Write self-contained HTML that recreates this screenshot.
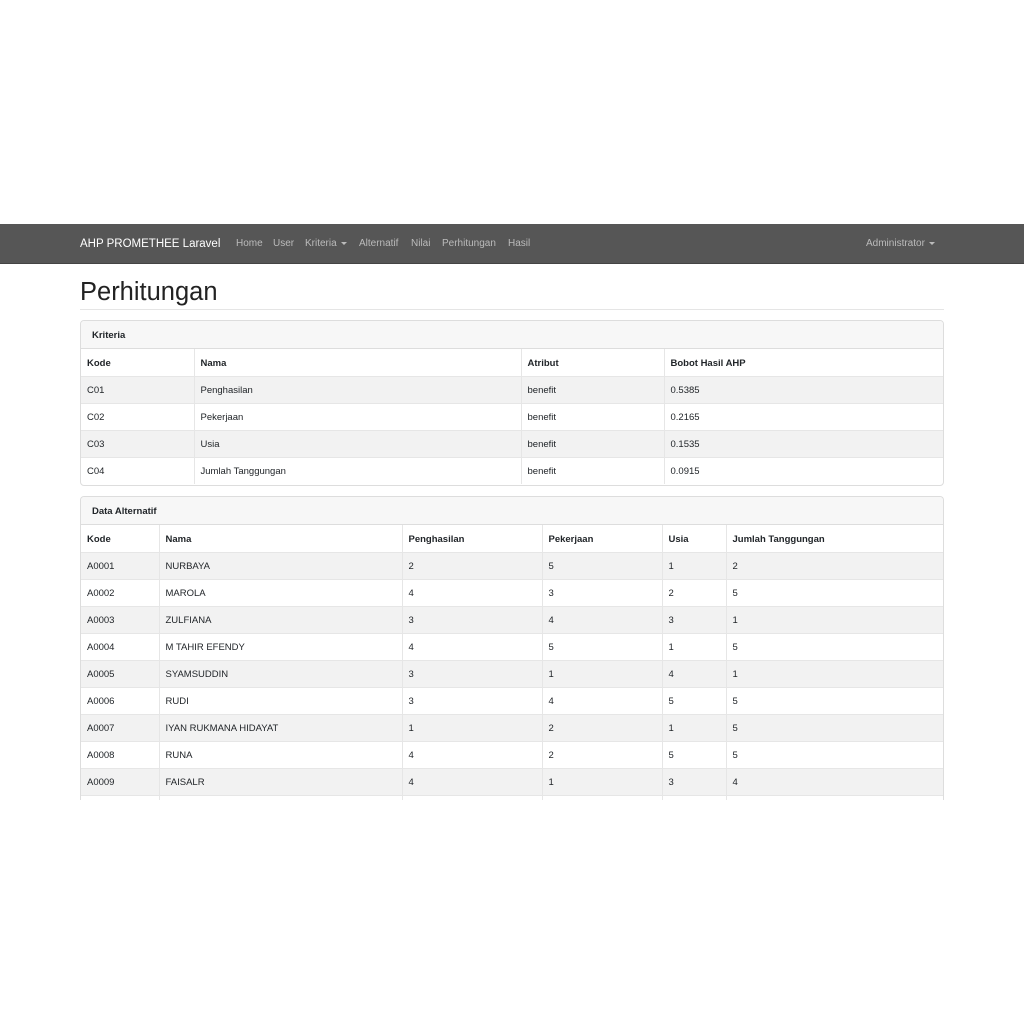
<!DOCTYPE html>
<html><head><style>
body{margin:0;width:1024px;height:1024px;background:#fff;font-family:"Liberation Sans",sans-serif;position:relative;overflow:hidden;color:#212529}
.nav{position:absolute;left:0;top:224px;width:1024px;height:39px;background:#565656;border-bottom:1px solid #444}
.nav span{position:absolute;top:1px;line-height:38px;font-size:10px;color:#bbb}
.brand{font-size:11.5px!important;color:#fff!important;left:80px}
.caret{display:inline-block;border-left:3px solid transparent;border-right:3px solid transparent;border-top:3px solid #bbb;vertical-align:middle;margin-left:4px}
h1{position:absolute;left:80px;top:275px;margin:0;font-weight:400;font-size:25.5px;line-height:34px;color:#222}
.hr{position:absolute;left:80px;top:309px;width:864px;height:1px;background:#e5e5e5}
.card{position:absolute;left:80px;width:862px;border:1px solid #ddd;border-radius:4px;overflow:hidden;background:#fff}
.ch{height:27px;line-height:29px;background:#f7f7f7;border-bottom:1px solid #ddd;font-size:9.5px;font-weight:bold;padding-left:11px}
table{border-collapse:collapse;width:100%;table-layout:fixed;font-size:9.5px}
td,th{height:27px;padding:2px 6px 0;text-align:left;border-left:1px solid #e6e6e6;border-top:1px solid #e6e6e6;box-sizing:border-box}
td:first-child,th:first-child{border-left:none}
th{border-top:none;height:27px}
tr:nth-child(even) td{background:#f2f2f2}
</style></head><body>
<div class="nav">
<span class="brand">AHP PROMETHEE Laravel</span>
<span style="left:236px">Home</span><span style="left:273px">User</span>
<span style="left:305px">Kriteria<i class="caret"></i></span>
<span style="left:359px">Alternatif</span><span style="left:411px">Nilai</span>
<span style="left:442px">Perhitungan</span><span style="left:508px">Hasil</span>
<span style="left:866px">Administrator<i class="caret"></i></span>
</div>
<h1>Perhitungan</h1><div class="hr"></div>
<div class="card" style="top:320px;height:164px">
<div class="ch">Kriteria</div>
<table><colgroup><col style="width:113px"><col style="width:327px"><col style="width:143px"><col></colgroup>
<tr><th>Kode</th><th>Nama</th><th>Atribut</th><th>Bobot Hasil AHP</th></tr>
<tr><td>C01</td><td>Penghasilan</td><td>benefit</td><td>0.5385</td></tr>
<tr><td>C02</td><td>Pekerjaan</td><td>benefit</td><td>0.2165</td></tr>
<tr><td>C03</td><td>Usia</td><td>benefit</td><td>0.1535</td></tr>
<tr><td>C04</td><td>Jumlah Tanggungan</td><td>benefit</td><td>0.0915</td></tr>
</table></div>
<div class="card" style="top:496px;height:310px;border-bottom:none;border-radius:4px 4px 0 0">
<div class="ch">Data Alternatif</div>
<table><colgroup><col style="width:78px"><col style="width:243px"><col style="width:140px"><col style="width:120px"><col style="width:64px"><col></colgroup>
<tr><th>Kode</th><th>Nama</th><th>Penghasilan</th><th>Pekerjaan</th><th>Usia</th><th>Jumlah Tanggungan</th></tr>
<tr><td>A0001</td><td>NURBAYA</td><td>2</td><td>5</td><td>1</td><td>2</td></tr>
<tr><td>A0002</td><td>MAROLA</td><td>4</td><td>3</td><td>2</td><td>5</td></tr>
<tr><td>A0003</td><td>ZULFIANA</td><td>3</td><td>4</td><td>3</td><td>1</td></tr>
<tr><td>A0004</td><td>M TAHIR EFENDY</td><td>4</td><td>5</td><td>1</td><td>5</td></tr>
<tr><td>A0005</td><td>SYAMSUDDIN</td><td>3</td><td>1</td><td>4</td><td>1</td></tr>
<tr><td>A0006</td><td>RUDI</td><td>3</td><td>4</td><td>5</td><td>5</td></tr>
<tr><td>A0007</td><td>IYAN RUKMANA HIDAYAT</td><td>1</td><td>2</td><td>1</td><td>5</td></tr>
<tr><td>A0008</td><td>RUNA</td><td>4</td><td>2</td><td>5</td><td>5</td></tr>
<tr><td>A0009</td><td>FAISALR</td><td>4</td><td>1</td><td>3</td><td>4</td></tr>
<tr><td></td><td></td><td></td><td></td><td></td><td></td></tr>
</table></div>
<div style="position:absolute;left:0;top:800px;width:1024px;height:224px;background:#fff"></div>
</body></html>
